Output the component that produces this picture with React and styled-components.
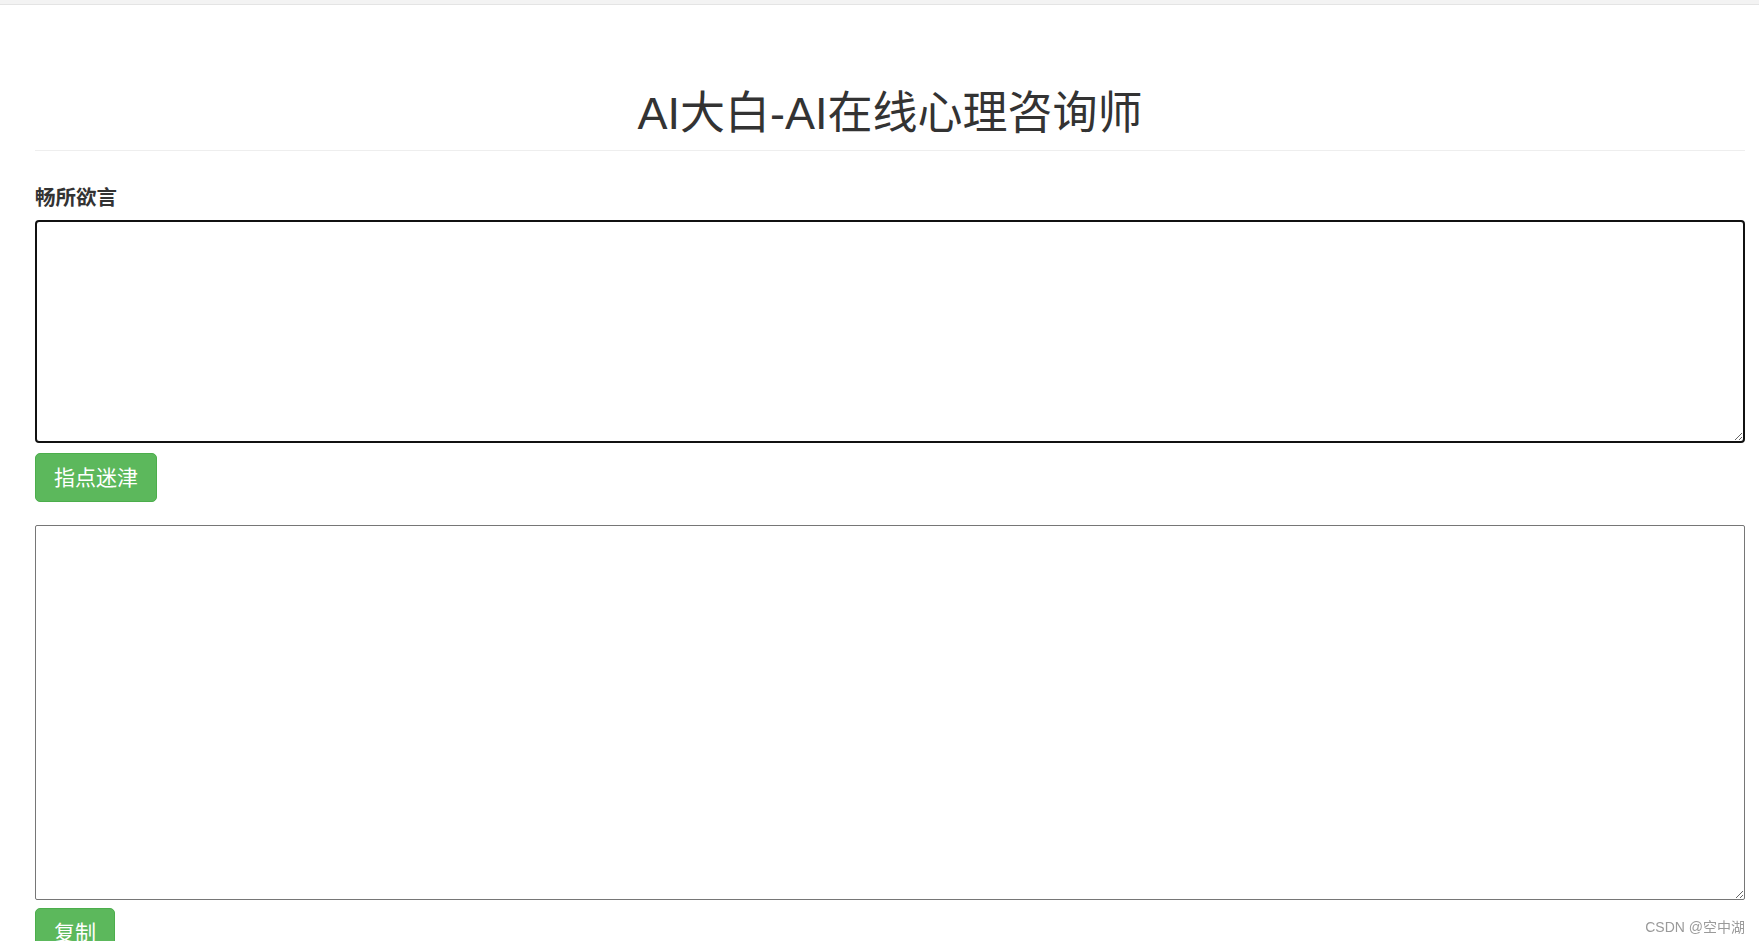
import React from 'react';
import styled, { createGlobalStyle } from 'styled-components';

const GlobalStyle = createGlobalStyle`
  html, body {
    margin: 0;
    padding: 0;
    background: #fff;
  }
  body {
    font-family: "Liberation Sans", "Noto Sans CJK SC", sans-serif;
    color: #333;
  }
  * {
    box-sizing: border-box;
  }
`;

const TopStrip = styled.div`
  height: 5px;
  background: #f3f3f3;
  border-bottom: 1px solid #e4e4e4;
`;

const Container = styled.div`
  padding: 0 14px 0 35px;
`;

const PageHeader = styled.div`
  margin-top: 84px;
  padding-bottom: 11px;
  border-bottom: 1px solid #eee;
`;

const Title = styled.h1`
  margin: 0;
  font-size: 45px;
  line-height: 50px;
  font-weight: 400;
  text-align: center;
  color: #333;
`;

const Label = styled.label`
  display: block;
  margin: 33px 0 8px;
  font-size: 20.5px;
  line-height: 28px;
  font-weight: 700;
  color: #333;
`;

const TextBox = styled.textarea`
  display: block;
  width: 100%;
  height: ${(p) => p.$height}px;
  margin-top: ${(p) => p.$gap || 0}px;
  padding: 6px 12px;
  font-family: inherit;
  font-size: 20px;
  color: #333;
  background: #fff;
  border: ${(p) => (p.$active ? '2px solid #111' : '1px solid #767676')};
  border-radius: ${(p) => (p.$active ? 4 : 2)}px;
  outline: none;
  resize: vertical;
`;

const Button = styled.button`
  display: flex;
  align-items: center;
  justify-content: center;
  height: 49px;
  margin-top: ${(p) => p.$gap}px;
  padding: 0 18px;
  font-family: inherit;
  font-size: 21px;
  line-height: 1;
  color: #fff;
  background: #5cb85c;
  border: 1px solid #4cae4c;
  border-radius: 5px;
  cursor: pointer;
`;

const Watermark = styled.div`
  position: fixed;
  right: 14px;
  bottom: 6px;
  font-size: 14px;
  line-height: 16px;
  color: #9a9a9a;
`;

export default function App() {
  return (
    <>
      <GlobalStyle />
      <TopStrip />
      <Container>
        <PageHeader>
          <Title>AI大白-AI在线心理咨询师</Title>
        </PageHeader>
        <Label htmlFor="question">畅所欲言</Label>
        <TextBox id="question" $active $height={223} />
        <Button $gap={10}>指点迷津</Button>
        <TextBox $gap={23} $height={375} />
        <Button $gap={8}>复制</Button>
        <div style={{ height: 40 }} />
      </Container>
      <Watermark>CSDN @空中湖</Watermark>
    </>
  );
}
